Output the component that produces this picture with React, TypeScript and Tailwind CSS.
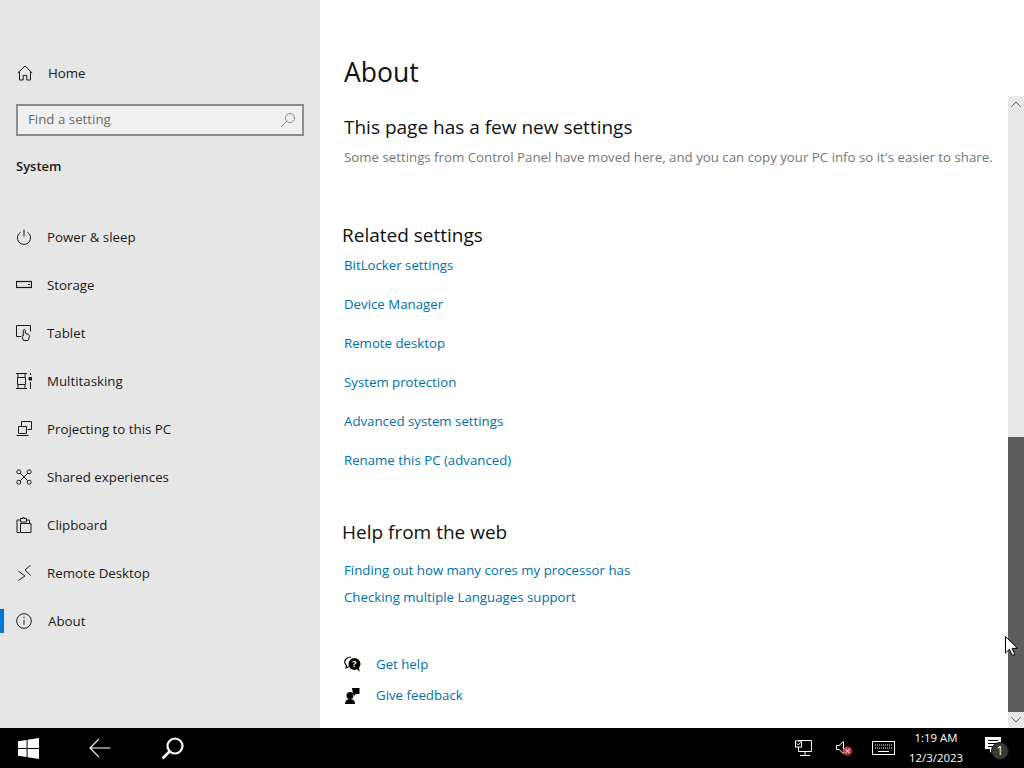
import React from "react";

const S = { fill: "none", stroke: "currentColor", strokeWidth: 1 } as const;

const Home = () => (
  <svg width="16" height="16" viewBox="0 0 16 16" {...S}><path d="M.8 8 8 1l7.200 7M2.500 6.600v8.400h3.700v-4.600h3.600V15h3.700V6.600" /></svg>
);
const Power = () => (
  <svg width="16" height="16" viewBox="0 0 16 16" {...S}><path d="M8 .5v7M4.600 3.200a6.600 6.600 0 1 0 6.800 0" /></svg>
);
const Storage = () => (
  <svg width="16" height="16" viewBox="0 0 16 16" {...S}><rect x=".5" y="4.500" width="15" height="6" strokeWidth="1.200" /><path d="M12 7.500h2" /></svg>
);
const Tablet = () => (
  <svg width="16" height="16" viewBox="0 0 16 16" {...S}><path d="M5 11.500H.5V.5h14v6" /><path d="M7.500 15.500 6 11.500c-.2-1 .8-1.300 1.300-.6V5.500c0-1.400 2-1.400 2 0v3l3 .8c.8.300 1 .8 1 1.500 0 2-.5 3.500-1.300 4.700z" fill="#e6e6e6" /></svg>
);
const Multi = () => (
  <svg width="16" height="16" viewBox="0 0 16 16" {...S}><path d="M0 .5h11M0 15.500h11M1.500 4.500h8v7h-8zM2 1v3M9 1v3M2 12v3M9 12v3M14.500 0v2M14.500 9v7" /><path d="M13 4.500h3v2.500h-3z" fill="currentColor" /></svg>
);
const Project = () => (
  <svg width="16" height="16" viewBox="0 0 16 16" {...S}><path d="M5.500 5V.5h10v8h-4" /><path d="M2.500 5.500h8v7h-8zM.5 14.500h12" /></svg>
);
const Shared = () => (
  <svg width="16" height="16" viewBox="0 0 16 16" {...S}><circle cx="2.800" cy="2.800" r="2" /><circle cx="13.200" cy="2.800" r="2" /><circle cx="2.800" cy="13.200" r="2" /><circle cx="13.200" cy="13.200" r="2" /><path d="m4.300 4.300 7.400 7.400M11.700 4.300l-7.400 7.400" /></svg>
);
const Clip = () => (
  <svg width="16" height="16" viewBox="0 0 16 16" {...S}><path d="M4 15.500H1V3h3M10.500 3H13.500v3" /><path d="M4.500 1.500h2.500V0h1v1.500h2.500V5H4.500z" /><path d="M4.500 6.500h10.500v9H4.500z" /></svg>
);
const Remote = () => (
  <svg width="16" height="16" viewBox="0 0 16 16" {...S}><path d="m2.300 6 6.700 5-6.700 4.500M14.700 0 9 5l5.700 5.500" /></svg>
);
const Info = () => (
  <svg width="16" height="16" viewBox="0 0 16 16" {...S}><circle cx="8" cy="8" r="7.300" /><path d="M8 6.800v5" /><circle cx="8" cy="4.400" r=".7" fill="currentColor" stroke="none" /></svg>
);

const nav: [string, React.ReactNode][] = [
  ["Power & sleep", <Power />],
  ["Storage", <Storage />],
  ["Tablet", <Tablet />],
  ["Multitasking", <Multi />],
  ["Projecting to this PC", <Project />],
  ["Shared experiences", <Shared />],
  ["Clipboard", <Clip />],
  ["Remote Desktop", <Remote />],
];

const related = [
  "BitLocker settings",
  "Device Manager",
  "Remote desktop",
  "System protection",
  "Advanced system settings",
  "Rename this PC (advanced)",
];

const LINK = "text-[#006fa8] text-[13.250px] leading-[20px]";
const NAVTEXT = "text-[13.300px] leading-5";

export default function App() {
  return (
    <div className="w-[1024px] h-[768px] flex flex-col overflow-hidden bg-white text-black relative font-['Open_Sans','Noto_Sans',sans-serif] text-[14px]">
      <div className="flex h-[728px]">
        {/* Sidebar */}
        <aside className="w-[320px] h-full bg-[#e6e6e6] flex flex-col pt-[49px] text-[#1a1a1a]">
          <div className="h-12 flex items-center pl-[17px] gap-[15px]">
            <Home />
            <span className={NAVTEXT}>Home</span>
          </div>
          <div className="mx-4 mt-[7px] h-8 border-2 border-[#8c8c8c] bg-[#f0f0f0] flex items-center pl-[10px] pr-[6px] justify-between text-[#6b6b6b]">
            <span className="text-[13.300px] leading-5 -mt-[2px]">Find a setting</span>
            <svg width="16" height="16" viewBox="0 0 16 16" fill="none" stroke="#8a8a8a"><circle cx="10" cy="6" r="4.500" /><path d="M6.800 9.200 1 15" /></svg>
          </div>
          <div className="h-5 mt-5 pl-4 font-semibold text-[13px] leading-5">System</div>
          <div className="flex flex-col mt-[37px]">
            {nav.map(([t, icon]) => (
              <div key={t} className="h-12 flex items-center pl-4 gap-[15px]">
                {icon}
                <span className={NAVTEXT}>{t}</span>
              </div>
            ))}
            <div className="h-12 flex items-center pl-4 gap-4 relative">
              <span className="absolute left-0 top-3 w-1 h-6 bg-[#0078d7]" />
              <Info />
              <span className={NAVTEXT}>About</span>
            </div>
          </div>
        </aside>

        {/* Content */}
        <main className="flex-1 pl-6 pt-[54px] min-w-0">
          <h1 className="text-[26.500px] leading-9 text-[#111]">About</h1>
          <h2 className="text-[19px] leading-7 mt-[23px] text-[#111]">This page has a few new settings</h2>
          <p className="text-[#767676] text-[13.270px] leading-5 mt-[6px] whitespace-nowrap">
            Some settings from Control Panel have moved here, and you can copy your PC info so it's easier to share.
          </p>
          <h2 className="text-[19px] leading-7 mt-[54px] -ml-[2px] text-[#111]">Related settings</h2>
          <div className="flex flex-col gap-[19px] mt-[6px]">
            {related.map((r) => (
              <a key={r} className={LINK}>{r}</a>
            ))}
          </div>
          <h2 className="text-[19px] leading-7 mt-[48px] -ml-[2px] text-[#111]">Help from the web</h2>
          <div className="flex flex-col gap-[7px] mt-[14px]">
            <a className={LINK}>Finding out how many cores my processor has</a>
            <a className={LINK}>Checking multiple Languages support</a>
          </div>
          <div className="flex items-center gap-[15px] mt-[47px] h-5">
            <svg width="17" height="17" viewBox="0 0 17 17">
              <path d="M7 1C3.500 1 .7 3.200.7 6c0 1.400.7 2.600 1.800 3.500L2 12l3-1.500" fill="none" stroke="#000" strokeWidth="1.200" />
              <circle cx="10.500" cy="8" r="6" fill="#000" />
              <path d="m13 13 2.500 3-.5-5z" fill="#000" />
              <text x="10.500" y="11" textAnchor="middle" fontSize="9" fontWeight="700" fill="#fff">?</text>
            </svg>
            <a className={LINK}>Get help</a>
          </div>
          <div className="flex items-center gap-[15px] mt-[11px] h-5">
            <svg width="17" height="17" viewBox="0 0 17 17" fill="#000">
              <circle cx="6" cy="8.500" r="3.500" />
              <path d="M1 17c0-3.300 2-5 5-5s5 1.700 5 5z" />
              <path d="M8 1h7.500v6h-3.500l-2 2V7H9z" />
            </svg>
            <a className={LINK}>Give feedback</a>
          </div>
        </main>

        {/* Scrollbar */}
        <div className="w-4 mt-[96px] bg-[#e8e8e8] flex flex-col shrink-0">
          <div className="h-4 flex items-center justify-center">
            <svg width="10" height="6" viewBox="0 0 10 6" fill="none" stroke="#555"><path d="m.5 5.500 4.500-4.500 4.500 4.500" /></svg>
          </div>
          <div className="h-[325px]" />
          <div className="flex-1 bg-[#5d5d5d]" />
          <div className="h-4 flex items-center justify-center">
            <svg width="10" height="6" viewBox="0 0 10 6" fill="none" stroke="#555"><path d="m.5.500 4.500 4.500 4.500-4.500" /></svg>
          </div>
        </div>
      </div>

      {/* Cursor */}
      <svg className="absolute left-[1005px] top-[636px]" width="13" height="21" viewBox="0 0 13 21">
        <path d="M.5.500v16.500l4-3.800 2.700 6.300 2.600-1.100-2.700-6.100h5.400z" fill="#fff" stroke="#000" />
      </svg>

      {/* Taskbar */}
      <footer className="h-10 bg-black flex items-center text-white">
        <svg className="ml-[18px]" width="21" height="21" viewBox="0 0 21 21" fill="#fff">
          <path d="M0 3.200 8.600 2v8H0zM9.600 1.800 21 0v10H9.600zM0 11h8.600v8L0 17.800zM9.600 11H21v10L9.600 19.200z" />
        </svg>
        <svg className="ml-[50px]" width="22" height="20" viewBox="0 0 22 20" fill="none" stroke="#fff" strokeWidth="1.200">
          <path d="M10 .8 1 10l9 9.200M1 10h20.500" />
        </svg>
        <svg className="ml-[50px]" width="23" height="23" viewBox="0 0 23 23" fill="none" stroke="#fff" strokeWidth="2.200">
          <circle cx="14" cy="9" r="7.500" />
          <path d="M8.500 14.500 1.500 21.500" strokeWidth="2.600" />
        </svg>
        <div className="ml-auto flex items-center">
          <svg width="17" height="17" viewBox="0 0 17 17" fill="none" stroke="#fff">
            <path d="M3.500.5H16.500V11.500H3.500zM10 11.500V15M5 15.500h10" />
            <rect x=".5" y="1" width="6" height="6" fill="#000" />
            <path d="m2 3.500 1.300 1.500L5.500 2.500" />
          </svg>
          <svg className="ml-[24px]" width="16" height="16" viewBox="0 0 16 16" fill="none">
            <path d="M.5 5.500h2.500L7.500 1.500v12L3 9.500H.5z" stroke="#fff" />
            <circle cx="11.500" cy="11" r="4.500" fill="#c9353f" />
            <path d="m9.500 9 4 4M13.500 9l-4 4" stroke="#fff" />
          </svg>
          <svg className="ml-[20px]" width="23" height="14" viewBox="0 0 23 14" fill="none" stroke="#fff">
            <rect x=".5" y=".5" width="22" height="13" />
            <path d="M3 4h17M3 7h17" strokeDasharray="1 1" />
            <path d="M6 10.500h11" />
          </svg>
          <div className="w-[82px] flex flex-col items-center text-[11.400px] leading-[20px] text-white">
            <span>1:19 AM</span>
            <span>12/3/2023</span>
          </div>
          <div className="relative w-[25px] h-6 mr-[14px] ml-[8px]">
            <svg className="absolute left-0 top-[1px]" width="18" height="18" viewBox="0 0 18 18" fill="#fff">
              <path d="M0 0h16v12H8l-3 4v-4H0z" />
              <path d="M3 3.500h10M3 6.500h10M3 9.500h7" stroke="#000" />
            </svg>
            <span className="absolute left-[6px] top-[6px] w-[18px] h-[18px] rounded-full bg-[#3a3a3a] border border-[#111] text-[12px] leading-[16px] text-center text-white">1</span>
          </div>
        </div>
      </footer>
    </div>
  );
}
